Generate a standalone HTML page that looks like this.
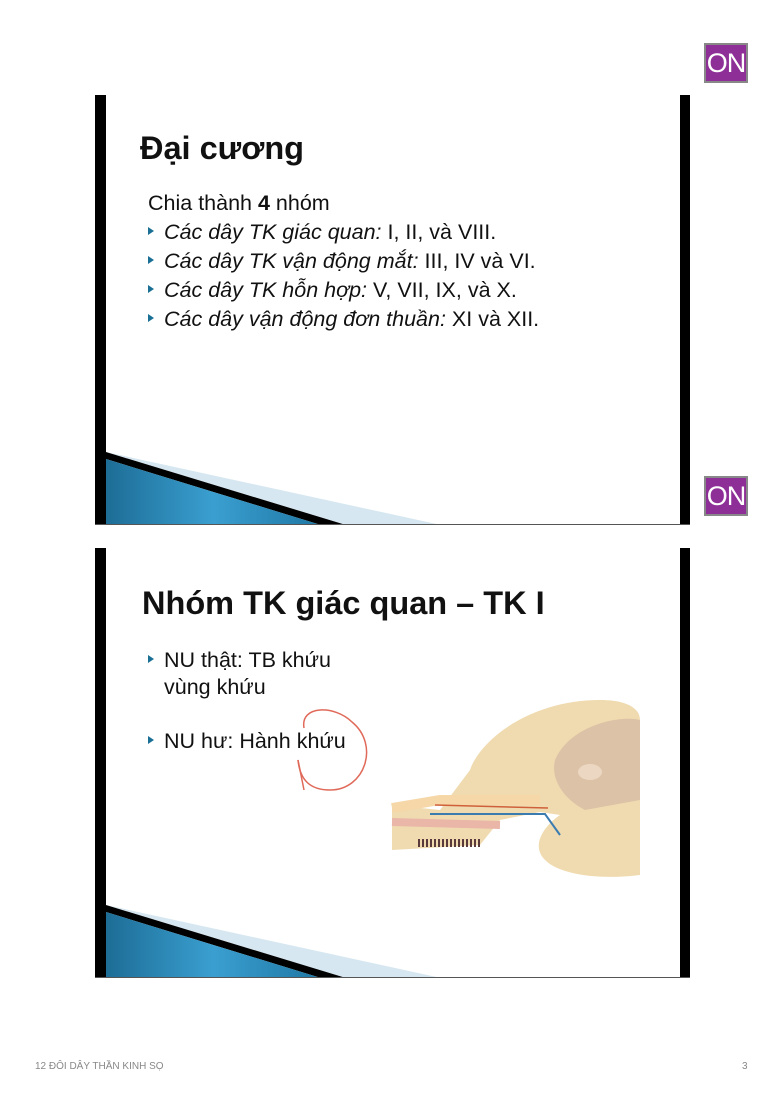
<!DOCTYPE html>
<html><head><meta charset="utf-8"><style>
body{margin:0;width:784px;height:1109px;background:#fff;position:relative;font-family:"Liberation Sans",sans-serif;overflow:hidden}
.slide{position:absolute;left:95px;width:595px;height:430px;background:#fff}
.lb{position:absolute;left:0;top:0;width:11px;height:100%;background:#000}
.rb{position:absolute;right:0;top:0;width:10px;height:100%;background:#000}
.bot{position:absolute;left:0;bottom:0;width:100%;height:1px;background:#555}
.t{position:absolute;color:#111;white-space:nowrap}
.ar{display:inline-block;width:0;height:0;border-left:6px solid #1a6f95;border-top:4.5px solid transparent;border-bottom:4.5px solid transparent;margin-right:10px;vertical-align:middle;position:relative;top:-2px}
.on{position:absolute;left:704px;width:40px;height:36px;background:#8e2f97;border:2px solid #888;color:#fff;font-size:27px;line-height:36px;text-align:center;letter-spacing:-1px}
.b{font-size:21.5px}
</style></head><body>
<div class="on" style="top:43px">ON</div>
<div class="on" style="top:476px">ON</div>

<div class="slide" style="top:95px">
<div class="lb"></div><div class="rb"></div>
<svg style="position:absolute;left:11px;top:355px" width="574" height="75">
<defs><linearGradient id="g" x1="0" x2="1"><stop offset="0" stop-color="#1d6d96"/><stop offset="0.5" stop-color="#3a9fd0"/><stop offset="1" stop-color="#1f77a4"/></linearGradient></defs>
<polygon points="0,2 335,75 240,75" fill="#d6e7f1"/>
<polygon points="0,2 240,75 215,75 0,9" fill="#000"/>
<polygon points="0,9 215,75 0,75" fill="url(#g)"/>
</svg>
<div class="bot"></div>
<div class="t" style="left:45px;top:35px;font-size:32.5px;font-weight:bold">Đại cương</div>
<div class="t b" style="left:53px;top:96px">Chia thành <b>4</b> nhóm</div>
<div class="t b" style="left:53px;top:125px"><span class="ar"></span><i>Các dây TK giác quan:</i> I, II, và VIII.</div>
<div class="t b" style="left:53px;top:154px"><span class="ar"></span><i>Các dây TK vận động mắt:</i> III, IV và VI.</div>
<div class="t b" style="left:53px;top:183px"><span class="ar"></span><i>Các dây TK hỗn hợp:</i> V, VII, IX, và X.</div>
<div class="t b" style="left:53px;top:212px"><span class="ar"></span><i>Các dây vận động đơn thuần:</i> XI và XII.</div>
</div>

<div class="slide" style="top:548px">
<div class="lb"></div><div class="rb"></div>
<svg style="position:absolute;left:11px;top:355px" width="574" height="75">
<defs><linearGradient id="g2" x1="0" x2="1"><stop offset="0" stop-color="#1d6d96"/><stop offset="0.5" stop-color="#3a9fd0"/><stop offset="1" stop-color="#1f77a4"/></linearGradient></defs>
<polygon points="0,2 335,75 240,75" fill="#d6e7f1"/>
<polygon points="0,2 240,75 215,75 0,9" fill="#000"/>
<polygon points="0,9 215,75 0,75" fill="url(#g2)"/>
</svg>
<div class="bot"></div>
<div class="t" style="left:47px;top:37px;font-size:32.5px;font-weight:bold">Nhóm TK giác quan – TK I</div>
<div class="t b" style="left:53px;top:99px;line-height:27px"><span class="ar"></span>NU thật: TB khứu<br><span style="padding-left:16px">vùng khứu</span></div>
<div class="t b" style="left:53px;top:181px"><span class="ar"></span>NU hư: Hành khứu</div>
</div>

<svg style="position:absolute;left:0;top:0" width="784" height="1109">
<path d="M440,810 L470,770 C480,740 530,700 600,700 C630,700 640,710 640,720 L640,875 C600,880 560,875 545,860 C530,845 545,825 560,815 L540,812 L500,820 L480,845 L392,850 L392,805 Z" fill="#f0dbb0"/>
<path d="M555,760 C570,725 620,715 640,720 L640,800 L585,810 C565,800 550,780 555,760 Z" fill="#dcc2a6"/>
<ellipse cx="590" cy="772" rx="12" ry="8" fill="#ecd8c2"/>
<path d="M392,808 L440,800 L540,800" stroke="#f5d7a8" stroke-width="10" fill="none"/>
<path d="M435,805 L548,808" stroke="#d0603a" stroke-width="1.5"/>
<path d="M430,814 L545,814 L560,835" stroke="#3a7bb0" stroke-width="2" fill="none"/>
<path d="M392,822 L500,825" stroke="#e9b6a8" stroke-width="8"/>
<path d="M418,843 L480,843" stroke="#5a3a3a" stroke-width="8" stroke-dasharray="2 2"/>
<path d="M304,728 C300,705 335,705 352,722 C380,745 365,790 330,790 C310,790 300,780 298,760" fill="none" stroke="#e06a5a" stroke-width="1.5"/>
<path d="M298,760 L304,790" stroke="#e06a5a" stroke-width="1.5" fill="none"/>
</svg>

<div class="t" style="left:35px;top:1061px;font-size:10px;color:#888">12 ĐÔI DÂY THẦN KINH SỌ</div>
<div class="t" style="left:742px;top:1061px;font-size:10px;color:#888">3</div>
</body></html>
